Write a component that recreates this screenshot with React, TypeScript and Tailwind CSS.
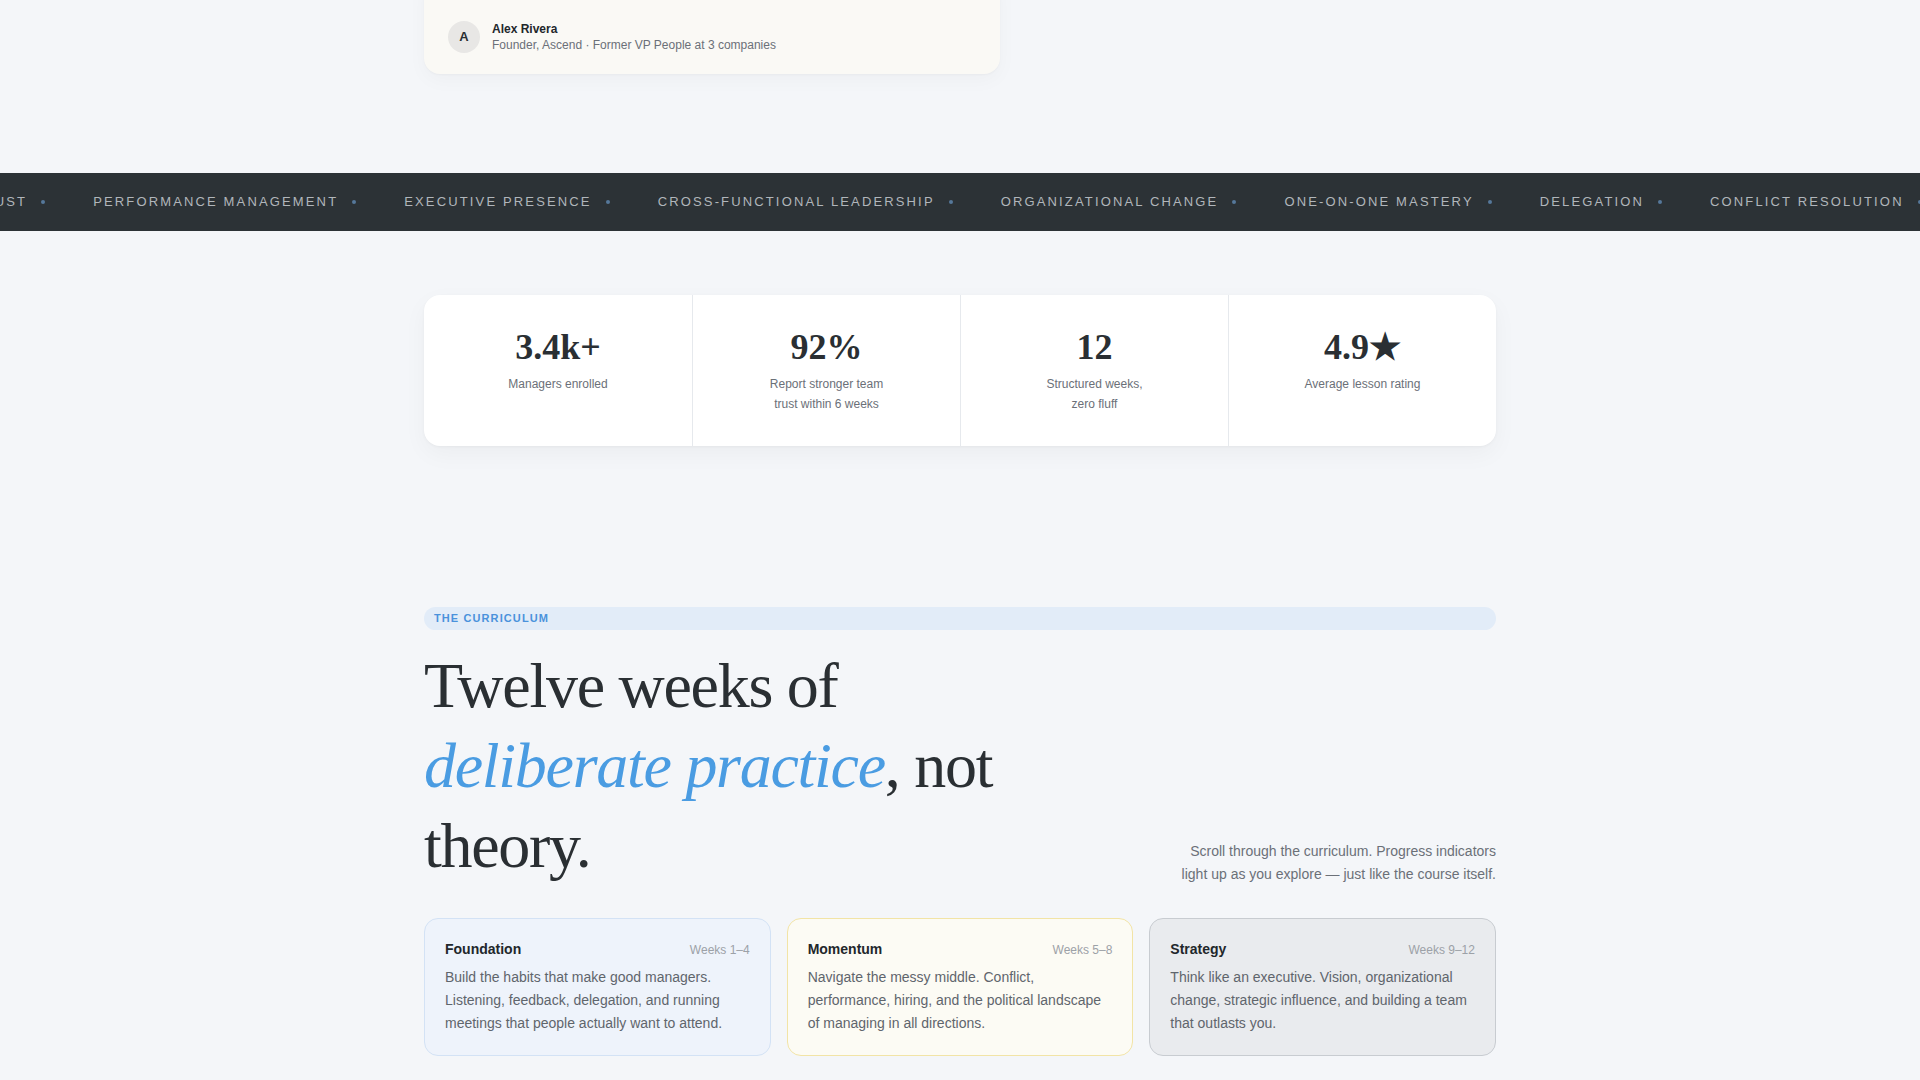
import React from "react";

const topics = [
  "Building Trust",
  "Performance Management",
  "Executive Presence",
  "Cross-Functional Leadership",
  "Organizational Change",
  "One-on-One Mastery",
  "Delegation",
  "Conflict Resolution",
  "Feedback Culture",
  "Hiring Well",
];

const stats = [
  { value: "3.4k+", label: ["Managers enrolled"] },
  { value: "92%", label: ["Report stronger team", "trust within 6 weeks"] },
  { value: "12", label: ["Structured weeks,", "zero fluff"] },
  { value: "4.9★", label: ["Average lesson rating"] },
];

const phases = [
  {
    title: "Foundation",
    weeks: "Weeks 1–4",
    body: "Build the habits that make good managers. Listening, feedback, delegation, and running meetings that people actually want to attend.",
    tone: "bg-[#eef3fb] border-[#d3e2f5]",
  },
  {
    title: "Momentum",
    weeks: "Weeks 5–8",
    body: "Navigate the messy middle. Conflict, performance, hiring, and the political landscape of managing in all directions.",
    tone: "bg-[#fcfbf4] border-[#f2e4a6]",
  },
  {
    title: "Strategy",
    weeks: "Weeks 9–12",
    body: "Think like an executive. Vision, organizational change, strategic influence, and building a team that outlasts you.",
    tone: "bg-[#e9ebee] border-[#c8ccd1]",
  },
];

export default function App() {
  return (
    <div className="min-h-screen overflow-hidden bg-[#f4f6f9] pb-16 font-['Liberation_Sans',Arial,sans-serif] text-[#2a2f33]">
      {/* Testimonial author */}
      <section className="mx-auto max-w-6xl px-10">
        <div className="-mt-6 max-w-xl rounded-2xl bg-[#faf9f5] px-6 pt-[45px] pb-[21px] shadow-[0_1px_2px_rgba(0,0,0,0.03),0_6px_20px_rgba(0,0,0,0.03)]">
          <div className="flex items-center gap-3">
            <div className="flex h-8 w-8 items-center justify-center rounded-full bg-[#e8e7e5] text-[13px] font-bold text-[#2a2f33]">
              A
            </div>
            <div>
              <div className="text-[12px] font-bold leading-4 text-[#22272b]">Alex Rivera</div>
              <div className="text-[12px] leading-4 text-[#6b7078]">
                Founder, Ascend · Former VP People at 3 companies
              </div>
            </div>
          </div>
        </div>
      </section>

      {/* Topic ticker */}
      <div className="mt-[99px] flex h-[58px] items-center overflow-hidden bg-[#2c3236]">
        <div className="-ml-[111px] flex items-center gap-12 whitespace-nowrap">
          {topics.map((t) => (
            <div key={t} className="flex items-center gap-[14px]">
              <span className="text-[13px] uppercase tracking-[0.165em] text-[#b1b6bb]">{t}</span>
              <span className="h-1 w-1 rounded-full bg-[#56789a]" />
            </div>
          ))}
        </div>
      </div>

      {/* Stats */}
      <section className="mx-auto mt-16 max-w-6xl px-10">
        <div className="grid grid-cols-4 rounded-2xl bg-white shadow-[0_1px_3px_rgba(0,0,0,0.04),0_8px_24px_rgba(0,0,0,0.04)]">
          {stats.map((s, i) => (
            <div
              key={s.value}
              className={`px-6 py-8 text-center ${i > 0 ? "border-l border-[#e6e9ed]" : ""}`}
            >
              <div className="font-['Liberation_Serif','Times_New_Roman',serif] text-[36px] font-bold leading-10 text-[#2a2f33]">
                {s.value}
              </div>
              <div className="mt-2 text-[12px] leading-[19.5px] text-[#6b7078]">
                {s.label.map((line) => (
                  <div key={line}>{line}</div>
                ))}
              </div>
            </div>
          ))}
        </div>
      </section>

      {/* Curriculum */}
      <section className="mx-auto mt-[161px] max-w-6xl px-10">
        <div className="flex h-[23px] items-center rounded-full bg-[#e2ecf8] px-2.5 text-[11px] font-bold tracking-[0.1em] text-[#4a92dc]">
          THE CURRICULUM
        </div>

        <div className="mt-4 flex items-end justify-between gap-8">
          <h2 className="max-w-[620px] font-['Liberation_Serif','Times_New_Roman',serif] text-[64px] font-normal leading-[80px] tracking-[-0.02em] text-[#2a2f33]">
            Twelve weeks of <span className="italic text-[#4a9ce2]">deliberate practice</span>, not theory.
          </h2>
          <p className="max-w-xs text-right text-[14px] leading-[23px] text-[#6b7078]">
            Scroll through the curriculum. Progress indicators light up as you explore — just like the course itself.
          </p>
        </div>

        <div className="mt-8 grid grid-cols-3 gap-4">
          {phases.map((p) => (
            <div key={p.title} className={`rounded-[14px] border p-5 ${p.tone}`}>
              <div className="flex items-baseline justify-between">
                <span className="text-[14px] font-bold leading-5 text-[#22272b]">{p.title}</span>
                <span className="text-[12px] text-[#9ca1a7]">{p.weeks}</span>
              </div>
              <p className="mt-[7px] text-[14px] leading-[23px] text-[#5f656c]">{p.body}</p>
            </div>
          ))}
        </div>
      </section>
    </div>
  );
}
